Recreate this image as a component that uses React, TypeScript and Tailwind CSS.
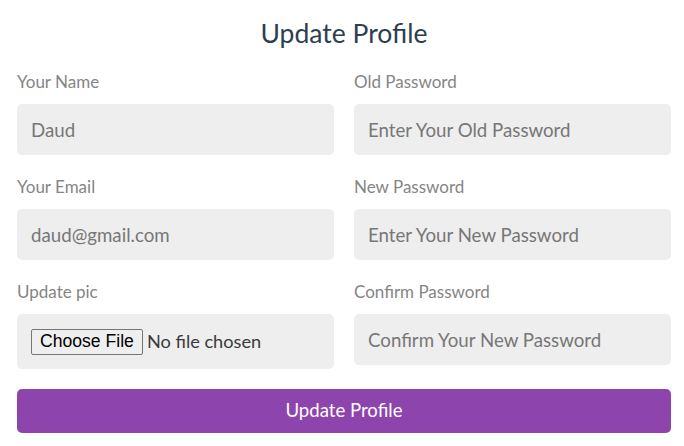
import React from "react";

const font = { fontFamily: "Lato, 'Noto Sans', sans-serif" };

function Field({ label, children, className = "" }: { label: string; children: React.ReactNode; className?: string }) {
  return (
    <div className="flex flex-col">
      <label className="text-[17px] leading-[24px] text-[#858585]">{label}</label>
      <div className={"mt-[10px] " + className}>{children}</div>
    </div>
  );
}

function TextBox({ value, placeholder }: { value?: string; placeholder?: string }) {
  return (
    <input
      readOnly
      defaultValue={value}
      placeholder={placeholder}
      className="w-full h-[51px] rounded-[5px] bg-[#eeeeee] px-[14px] text-[18.7px] text-[#777777] placeholder:text-[#777777] outline-none"
      style={font}
    />
  );
}

export default function App() {
  return (
    <div className="w-[684px] h-[446px] bg-white overflow-hidden" style={font}>
      <div className="ml-[17px] w-[654px] pt-[17px]">
        <h1 className="text-center text-[26.5px] leading-[32px] text-[#2c3e50]">Update Profile</h1>
        <div className="mt-[21px] grid grid-cols-2 gap-x-[20px] gap-y-[20px]">
          <Field label="Your Name">
            <TextBox value="Daud" />
          </Field>
          <Field label="Old Password">
            <TextBox placeholder="Enter Your Old Password" />
          </Field>
          <Field label="Your Email">
            <TextBox value="daud@gmail.com" />
          </Field>
          <Field label="New Password">
            <TextBox placeholder="Enter Your New Password" />
          </Field>
          <Field label="Update pic">
            <div className="h-[55px] rounded-[5px] bg-[#eeeeee] px-[14px] flex items-center">
              <span
                className="h-[26px] px-[8px] flex items-center border border-[#767676] rounded-[2px] bg-[#efefef] text-[17.6px] text-black"
                style={{ fontFamily: "'Liberation Sans', Arial, sans-serif" }}
              >
                Choose File
              </span>
              <span className="ml-[4px] text-[18.2px] text-[#3a3a3a]">No file chosen</span>
            </div>
          </Field>
          <Field label="Confirm Password">
            <TextBox placeholder="Confirm Your New Password" />
          </Field>
        </div>
        <button className="mt-[20px] w-full h-[44px] rounded-[5px] bg-[#8e44ad] text-white text-[18.6px]" style={font}>
          Update Profile
        </button>
      </div>
    </div>
  );
}
